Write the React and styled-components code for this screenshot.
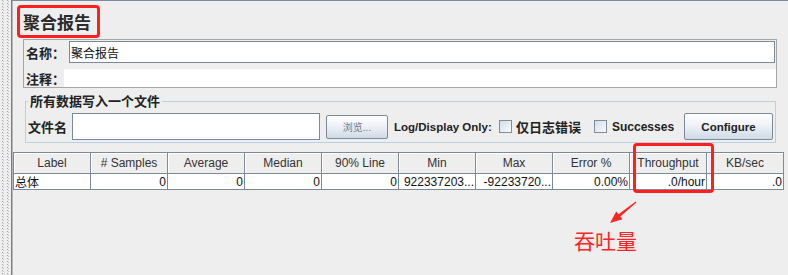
import React from "react";
import styled, { createGlobalStyle } from "styled-components";

const Global = createGlobalStyle`
  html, body { margin: 0; padding: 0; background: #eeeeee; }
  body {
    width: 788px; height: 275px; overflow: hidden;
    font-family: "Liberation Sans", "Noto Sans CJK SC", sans-serif;
    color: #222;
  }
  * { box-sizing: border-box; }
`;

const Page = styled.div`
  position: relative;
  display: flex;
  width: 788px;
  height: 275px;
  background: #eeeeee;
`;

const Splitter = styled.div`
  flex: none;
  width: 11px;
  height: 100%;
  background-color: #eeeeee;
  background-image:
    repeating-linear-gradient(to bottom, #a4a4a4 0 1px, transparent 1px 3px),
    repeating-linear-gradient(to bottom, transparent 0 1px, #c4c4c4 1px 2px, transparent 2px 3px),
    repeating-linear-gradient(to bottom, #a4a4a4 0 1px, transparent 1px 3px),
    repeating-linear-gradient(to bottom, transparent 0 1px, #c4c4c4 1px 2px, transparent 2px 3px);
  background-size: 1px 100%;
  background-position: 2px 0, 3px 0, 7px 0, 8px 0;
  background-repeat: no-repeat;
`;

const Main = styled.div`
  flex: 1;
  display: flex;
  flex-direction: column;
  align-items: flex-start;
  border-left: 1px solid #6f8193;
  border-top: 1px solid #7a8a9b;
  box-shadow: inset 1px 0 0 #b4b8bc;
  padding-left: 1px;
`;

const TitleBox = styled.div`
  margin: 4px 0 0 4px;
  width: 83px;
  height: 33px;
  border: 3px solid #ff1f1f;
  border-radius: 4px;
  padding-left: 3px;
  display: flex;
  align-items: center;
  font-size: 17px;
  font-weight: bold;
  color: #2a2a2a;
`;

const NamePanel = styled.div`
  margin: 1px 0 0 10px;
  width: 754px;
  height: 49px;
  border: 1px solid #a6a6a6;
  padding: 1px 1px 0 2px;
  display: flex;
  flex-direction: column;
`;

const FieldRow = styled.div`
  display: flex;
  align-items: center;
  height: ${(p) => p.$h}px;
  margin-top: ${(p) => p.$mt || 0}px;
  margin-right: ${(p) => p.$mr || 0}px;
`;

const FieldLabel = styled.div`
  flex: none;
  width: ${(p) => p.$w}px;
  font-size: 13px;
  font-weight: bold;
  color: #222;
  white-space: nowrap;
`;

const TextInput = styled.div`
  flex: 1;
  height: 100%;
  background: #ffffff;
  border: ${(p) => (p.$plain ? "none" : "1px solid #7a8a99")};
  padding-left: 1px;
  display: flex;
  align-items: center;
  font-size: 12px;
  color: #111;
`;

const FileSet = styled.fieldset`
  margin: 6px 0 0 12px;
  width: 751px;
  border: 1px solid #b8cfe5;
  padding: 0 1px 2px 2px;
  min-width: 0;
`;

const Legend = styled.legend`
  padding: 0 2px;
  margin: 0;
  font-size: 13px;
  font-weight: bold;
  line-height: 15px;
  color: #222;
`;

const ControlRow = styled.div`
  display: flex;
  align-items: center;
  height: 27px;
  margin-top: 4px;
`;

const FileInput = styled.div`
  flex: none;
  width: 248px;
  height: 27px;
  background: #fff;
  border: 1px solid #7a8a99;
`;

const Button = styled.div`
  flex: none;
  width: ${(p) => p.$w}px;
  height: ${(p) => p.$h}px;
  margin-left: ${(p) => p.$ml}px;
  border: 1px solid #7a8a99;
  border-radius: 2px;
  background: linear-gradient(to bottom, #ffffff 0%, #eef2f7 45%, #cfdae6 100%);
  display: flex;
  align-items: center;
  justify-content: center;
  font-size: ${(p) => (p.$small ? "10px" : "11.5px")};
  font-weight: ${(p) => (p.$small ? "normal" : "bold")};
  color: ${(p) => (p.$small ? "#777" : "#222")};
`;

const BoldText = styled.span`
  flex: none;
  width: ${(p) => p.$w}px;
  margin-left: ${(p) => p.$ml}px;
  font-size: ${(p) => p.$fs || 11.5}px;
  font-weight: bold;
  color: #222;
  white-space: nowrap;
`;

const CheckBox = styled.span`
  flex: none;
  width: 13px;
  height: 13px;
  border: 1px solid #7d8d9d;
  background: linear-gradient(135deg, #d3dce6 0%, #eef2f6 70%, #fbfcfd 100%);
`;

const Table = styled.div`
  margin-top: 9px;
  display: grid;
  grid-template-columns: repeat(10, 77px);
  border-left: 1px solid #7a8a99;
  border-top: 1px solid #7a8a99;
`;

const HeadCell = styled.div`
  height: 21px;
  border-right: 1px solid #7f8c99;
  border-bottom: 1px solid #7a8a99;
  box-shadow: inset 1px 1px 0 #ffffff;
  background: #eeeeee;
  display: flex;
  align-items: center;
  justify-content: center;
  font-size: 12px;
  color: #333;
  white-space: nowrap;
`;

const DataCell = styled.div`
  height: 16px;
  border-right: 1px solid #7a8a99;
  border-bottom: 1px solid #7a8a99;
  background: #ffffff;
  display: flex;
  align-items: center;
  justify-content: ${(p) => (p.$left ? "flex-start" : "flex-end")};
  padding: 0 1px;
  font-size: 12px;
  color: #111;
  white-space: nowrap;
  overflow: hidden;
`;

const Highlight = styled.div`
  position: absolute;
  left: 633px;
  top: 143px;
  width: 81px;
  height: 50px;
  border: 3px solid #ff1f1f;
  border-radius: 4px;
  pointer-events: none;
`;

const Arrow = styled.svg`
  position: absolute;
  left: 605px;
  top: 198px;
  width: 36px;
  height: 30px;
`;

const Caption = styled.div`
  position: absolute;
  left: 574px;
  top: 228px;
  font-family: "Noto Sans CJK SC", sans-serif;
  font-size: 21px;
  line-height: 24px;
  color: #ff2424;
  white-space: nowrap;
`;

const headers = ["Label", "# Samples", "Average", "Median", "90% Line", "Min", "Max", "Error %", "Throughput", "KB/sec"];
const row = ["总体", "0", "0", "0", "0", "922337203...", "-92233720...", "0.00%", ".0/hour", ".0"];

export default function App() {
  return (
    <Page>
      <Global />
      <Splitter />
      <Main>
        <TitleBox>聚合报告</TitleBox>
        <NamePanel>
          <FieldRow $h={22}>
            <FieldLabel $w={43}>名称：</FieldLabel>
            <TextInput>聚合报告</TextInput>
          </FieldRow>
          <FieldRow $h={18} $mt={6} $mr={-1}>
            <FieldLabel $w={38}>注释：</FieldLabel>
            <TextInput $plain />
          </FieldRow>
        </NamePanel>
        <FileSet>
          <Legend>所有数据写入一个文件</Legend>
          <ControlRow>
            <FieldLabel $w={44}>文件名</FieldLabel>
            <FileInput />
            <Button $w={62} $h={24} $ml={6} $small>浏览...</Button>
            <BoldText $ml={6} $w={105}>Log/Display Only:</BoldText>
            <CheckBox />
            <BoldText $ml={4} $w={78} $fs={13}>仅日志错误</BoldText>
            <CheckBox />
            <BoldText $ml={5} $w={67} $fs={12}>Successes</BoldText>
            <Button $w={89} $h={27} $ml={5}>Configure</Button>
          </ControlRow>
        </FileSet>
        <Table>
          {headers.map((h) => (
            <HeadCell key={h}>{h}</HeadCell>
          ))}
          {row.map((v, i) => (
            <DataCell key={i} $left={i === 0}>{v}</DataCell>
          ))}
        </Table>
      </Main>
      <Highlight />
      <Arrow viewBox="605 198 36 30">
        <polygon
          points="610,223 616.2,211.5 618.5,214.2 635.7,201.6 636.4,202.5 620.3,216.6 622.5,219.3"
          fill="#ff2424"
        />
      </Arrow>
      <Caption>吞吐量</Caption>
    </Page>
  );
}
